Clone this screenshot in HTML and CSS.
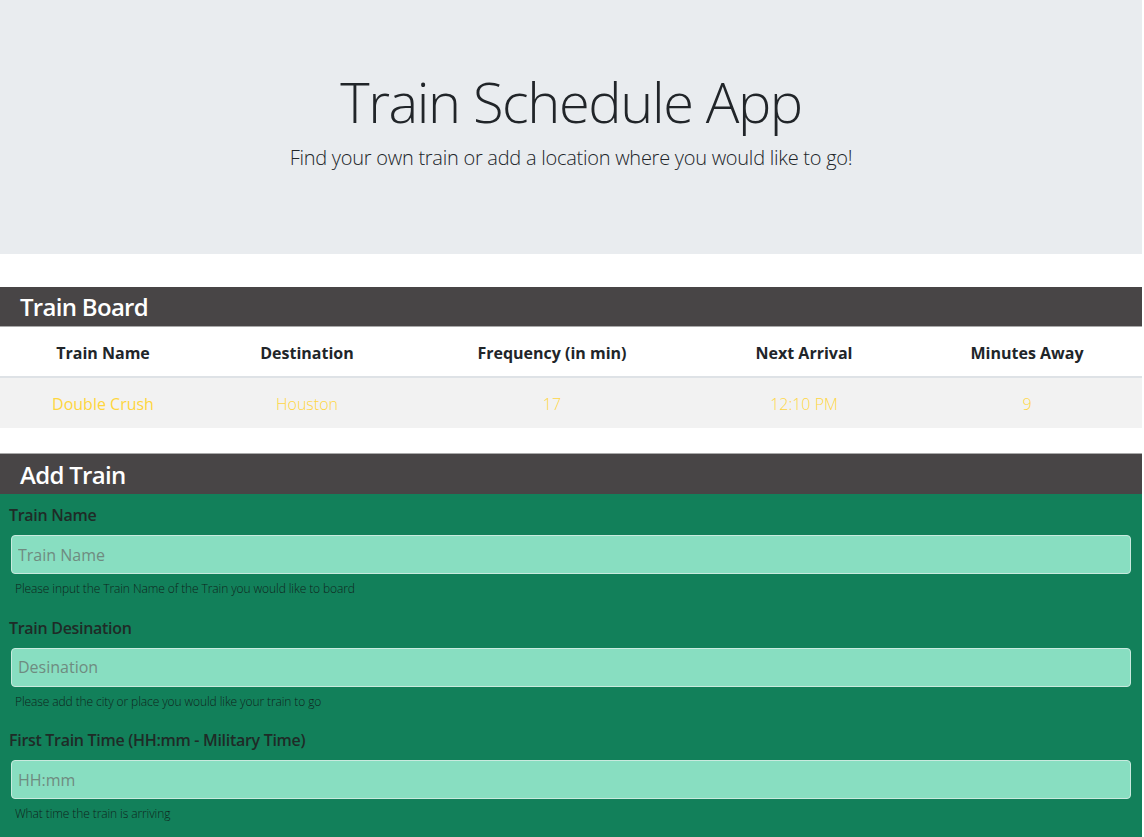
FILE: index.html
```html
<!DOCTYPE html>
<html lang="en">
<head>
<meta charset="utf-8">
<title>Train Schedule App</title>
<link rel="stylesheet" href="styles.css">
</head>
<body>
<div class="page">
  <header class="jumbotron">
    <h1 class="title">Train Schedule App</h1>
    <p class="lead">Find your own train or add a location where you would like to go!</p>
  </header>

  <section class="board">
    <h2 class="bar">Train Board</h2>
    <table class="table">
      <colgroup>
        <col class="c1"><col class="c2"><col class="c3"><col class="c4"><col class="c5">
      </colgroup>
      <thead>
        <tr>
          <th>Train Name</th>
          <th>Destination</th>
          <th>Frequency (in min)</th>
          <th>Next Arrival</th>
          <th>Minutes Away</th>
        </tr>
      </thead>
      <tbody>
        <tr>
          <td class="name">Double Crush</td>
          <td>Houston</td>
          <td>17</td>
          <td>12:10 PM</td>
          <td>9</td>
        </tr>
      </tbody>
    </table>
  </section>

  <section class="add">
    <h2 class="bar bar-top">Add Train</h2>
    <form class="form">
      <div class="group">
        <label class="label" for="tn">Train Name</label>
        <input class="input" id="tn" type="text" placeholder="Train Name">
        <small class="help">Please input the Train Name of the Train you would like to board</small>
      </div>
      <div class="group">
        <label class="label" for="td">Train Desination</label>
        <input class="input" id="td" type="text" placeholder="Desination">
        <small class="help">Please add the city or place you would like your train to go</small>
      </div>
      <div class="group">
        <label class="label" for="tt">First Train Time (HH:mm - Military Time)</label>
        <input class="input" id="tt" type="text" placeholder="HH:mm">
        <small class="help">What time the train is arriving</small>
      </div>
    </form>
  </section>
</div>
</body>
</html>
```

FILE: styles.css
```css
html, body {
  margin: 0;
  padding: 0;
  background: #ffffff;
}
body {
  font-family: "Open Sans", "Noto Sans", "Liberation Sans", sans-serif;
  color: #212529;
  overflow: hidden;
}
.page {
  width: 1142px;
}
.jumbotron {
  background: #e9ecef;
  height: 254px;
  box-sizing: border-box;
  padding-top: 68px;
  text-align: center;
}
.title {
  margin: 0 0 8px;
  font-size: 56px;
  font-weight: 300;
  line-height: 67px;
  letter-spacing: -1.4px;
  color: #212529;
}
.lead {
  margin: 0;
  font-size: 20px;
  font-weight: 300;
  line-height: 30px;
  letter-spacing: -0.26px;
  color: #212529;
}
.board {
  margin-top: 33px;
}
.bar {
  margin: 0;
  background: #484546;
  color: #ffffff;
  font-size: 24px;
  font-weight: 600;
  line-height: 40px;
  height: 39px;
  padding-left: 20px;
  letter-spacing: -0.7px;
  border-bottom: 1px solid #a9a9a9;
}
.bar-top {
  border-bottom: none;
  border-top: 1px solid #a9a9a9;
  height: 40px;
  line-height: 42px;
}
.table {
  width: 100%;
  border-collapse: collapse;
  table-layout: fixed;
}
.c1 { width: 206px; }
.c2 { width: 202px; }
.c3 { width: 288px; }
.c4 { width: 216px; }
.c5 { width: 230px; }
.table th {
  height: 47px;
  padding: 2px 0 0;
  font-size: 16px;
  font-weight: 700;
  color: #212529;
  text-align: center;
  border-bottom: 2px solid #dee2e6;
}
.table td {
  height: 49px;
  padding: 1px 0 0;
  background: #f2f2f2;
  text-align: center;
  font-size: 16px;
  font-weight: 300;
  color: #ffd643;
}
.table td.name {
  font-weight: 400;
  color: #ffd63d;
}
.add {
  margin-top: 25px;
}
.form {
  background: #12805a;
  padding: 9px 11px 30px 9px;
}
.group {
  display: flex;
  flex-direction: column;
  align-items: flex-start;
  margin-bottom: 17.5px;
}
.label {
  font-size: 16px;
  font-weight: 600;
  line-height: 24px;
  letter-spacing: -0.3px;
  color: #1f2b27;
  margin-bottom: 8px;
}
.input {
  box-sizing: border-box;
  width: 1120px;
  height: 39px;
  margin: 0 0 0 2px;
  padding: 0 6px;
  background: #88dec1;
  border: 1px solid #c9eadf;
  border-radius: 4px;
  font-family: inherit;
  font-size: 16px;
  color: #212529;
  outline: none;
}
.input::placeholder {
  color: #6f8b80;
}
.help {
  margin: 5px 0 0 6px;
  font-size: 12px;
  font-weight: 300;
  line-height: 19px;
  letter-spacing: -0.1px;
  color: #0f251c;
}
```
